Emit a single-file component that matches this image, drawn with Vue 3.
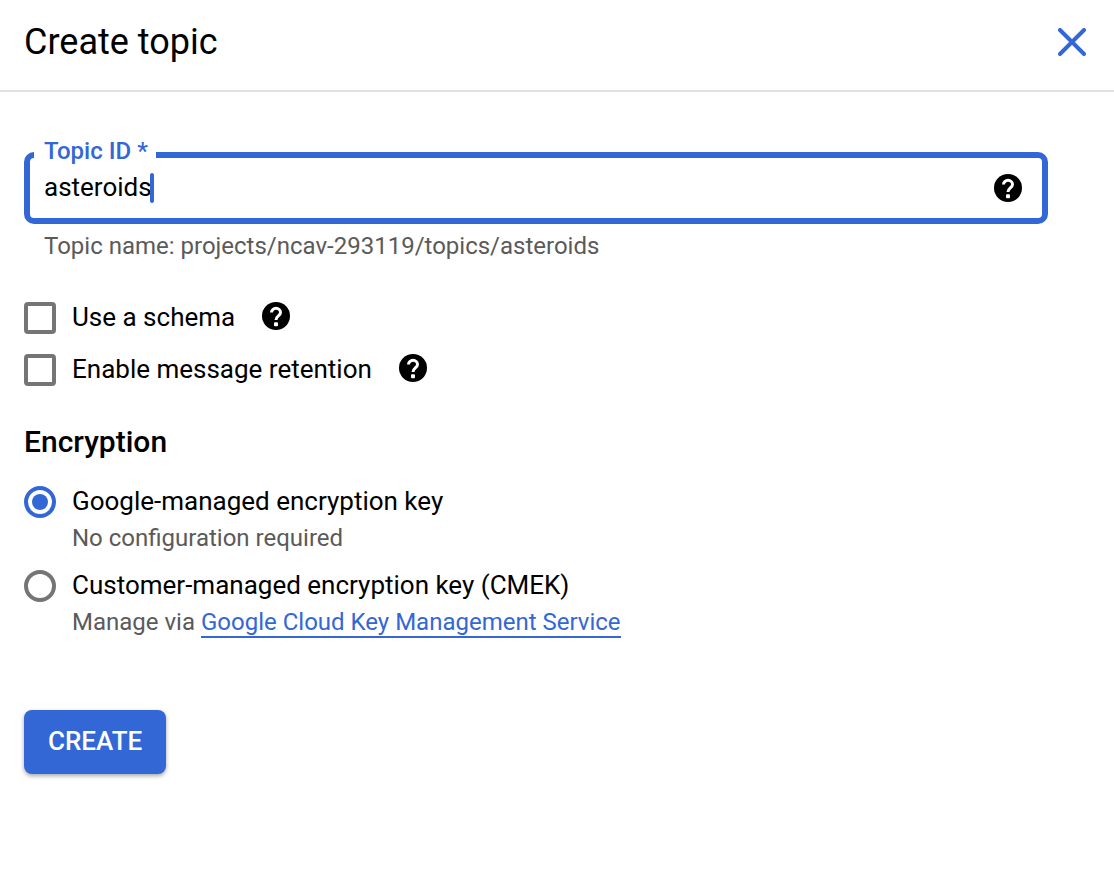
<script setup>
import { ref } from 'vue'

const topicId = ref('asteroids')
const encryption = ref('google')
const options = ref([
  { id: 'schema', label: 'Use a schema', checked: false },
  { id: 'retention', label: 'Enable message retention', checked: false },
])
</script>

<template>
  <main class="panel">
    <header class="header">
      <h1 class="title">Create topic</h1>
      <button class="icon-button" type="button" aria-label="Close">
        <svg width="28" height="28" viewBox="0 0 28 28" aria-hidden="true">
          <path d="M2 2L26 26M26 2L2 26" fill="none" stroke="#3367d6" stroke-width="4" stroke-linecap="round" />
        </svg>
      </button>
    </header>

    <form class="form" @submit.prevent>
      <fieldset class="field">
        <legend class="legend"><label for="topic-id">Topic ID *</label></legend>
        <div class="field-row">
          <input id="topic-id" v-model="topicId" class="text" type="text" aria-describedby="topic-name" />
          <span class="caret"></span>
          <button class="icon-button field-help" type="button" aria-label="Topic ID help">
            <svg width="28" height="28" viewBox="0 0 28 28" aria-hidden="true">
              <circle cx="14" cy="14" r="14" />
              <path class="mark" d="M9.5 10.5a4.5 4.2 0 0 1 9 0c0 3.4-4.5 3.6-4.5 7.5" />
              <rect x="12" y="20.2" width="4" height="4" rx="1" fill="#fff" />
            </svg>
          </button>
        </div>
      </fieldset>
      <p id="topic-name" class="hint">Topic name: projects/ncav-293119/topics/{{ topicId }}</p>

      <div class="options">
        <div v-for="option in options" :key="option.id" class="option">
          <input :id="option.id" v-model="option.checked" class="checkbox" type="checkbox" />
          <label :for="option.id" class="label">{{ option.label }}</label>
          <button class="icon-button option-help" type="button" :aria-label="option.label + ' help'">
            <svg width="28" height="28" viewBox="0 0 28 28" aria-hidden="true">
              <circle cx="14" cy="14" r="14" />
              <path class="mark" d="M9.5 10.5a4.5 4.2 0 0 1 9 0c0 3.4-4.5 3.6-4.5 7.5" />
              <rect x="12" y="20.2" width="4" height="4" rx="1" fill="#fff" />
            </svg>
          </button>
        </div>
      </div>

      <h2 class="section-title">Encryption</h2>
      <div class="choices" role="radiogroup" aria-label="Encryption">
        <div class="choice">
          <input id="key-google" v-model="encryption" class="radio" type="radio" name="encryption" value="google" />
          <div>
            <label for="key-google" class="label">Google-managed encryption key</label>
            <p class="note">No configuration required</p>
          </div>
        </div>
        <div class="choice">
          <input id="key-customer" v-model="encryption" class="radio" type="radio" name="encryption" value="customer" />
          <div>
            <label for="key-customer" class="label">Customer-managed encryption key (CMEK)</label>
            <p class="note">Manage via <a class="link" href="#">Google Cloud Key Management Service</a></p>
          </div>
        </div>
      </div>

      <button class="create" type="submit">CREATE</button>
    </form>
  </main>
</template>

<style>
body {
  background: #fff;
}
</style>

<style scoped>
.panel {
  font-family: Roboto, "Liberation Sans", sans-serif;
  font-size: 26px;
  line-height: 32px;
  color: #000;
}
.header {
  display: flex;
  align-items: center;
  justify-content: space-between;
  padding: 20px 28px 26px 24px;
  border-bottom: 2px solid #e0e0e0;
}
.title {
  margin: 0;
  font-size: 36px;
  line-height: 44px;
  font-weight: 400;
}
.icon-button {
  display: flex;
  padding: 0;
  border: 0;
  background: none;
  cursor: pointer;
}
.mark {
  fill: none;
  stroke: #fff;
  stroke-width: 3;
}
.form {
  padding: 45px 66px 24px 24px;
}
.field {
  min-width: 0;
  margin: 0;
  padding: 0 20px 15px 4px;
  border: 6px solid #3367d6;
  border-radius: 10px;
}
.legend {
  padding: 0 8px 8px 10px;
  font-size: 24px;
  line-height: 28px;
  font-weight: 500;
  color: #3367d6;
}
.field-row {
  display: flex;
  align-items: center;
  padding-left: 10px;
}
.text {
  field-sizing: content;
  min-width: 1px;
  max-width: 100%;
  height: 30px;
  padding: 0 0 2px;
  border: 0;
  outline: 0;
  background: none;
  font: inherit;
  line-height: 28px;
  box-sizing: border-box;
  color: inherit;
  caret-color: transparent;
}
.caret {
  width: 4px;
  height: 30px;
  margin-left: -2px;
  border-radius: 2px;
  background: #3367d6;
}
.field-help {
  margin-left: auto;
}
.hint {
  margin: 8px 0 0;
  padding: 0 20px;
  font-size: 24px;
  line-height: 28px;
  color: #5a5a5a;
}
.options {
  display: grid;
  gap: 20px;
  margin-top: 42px;
}
.option {
  display: flex;
  align-items: center;
}
.checkbox,
.radio {
  appearance: none;
  flex: none;
  width: 32px;
  height: 32px;
  margin: 0 16px 0 0;
  border: 4px solid #757575;
}
.checkbox {
  border-radius: 4px;
}
.checkbox:checked {
  border-color: #3367d6;
  background: #3367d6;
}
.radio {
  border-radius: 50%;
}
.radio:checked {
  padding: 4px;
  border-color: #3367d6;
  background: #3367d6;
  background-clip: content-box;
}
.label {
  display: block;
  padding-bottom: 2px;
  line-height: 30px;
}
.option-help {
  margin: 0 0 4px 27px;
}
.section-title {
  margin: 38px 0 26px;
  font-size: 30px;
  line-height: 36px;
  font-weight: 500;
}
.choices {
  display: grid;
  gap: 17px;
}
.choice {
  display: flex;
}
.note {
  margin: 5px 0 0;
  font-size: 24px;
  line-height: 30px;
  color: #5a5a5a;
}
.link {
  color: #3367d6;
  text-decoration: none;
  border-bottom: 2px solid #3367d6;
}
.create {
  margin-top: 73px;
  padding: 15px 24px 17px;
  border: 0;
  border-radius: 8px;
  background: #3367d6;
  box-shadow: 0 2px 4px rgba(0, 0, 0, 0.35);
  font: inherit;
  font-weight: 500;
  color: #fff;
  cursor: pointer;
}
</style>
